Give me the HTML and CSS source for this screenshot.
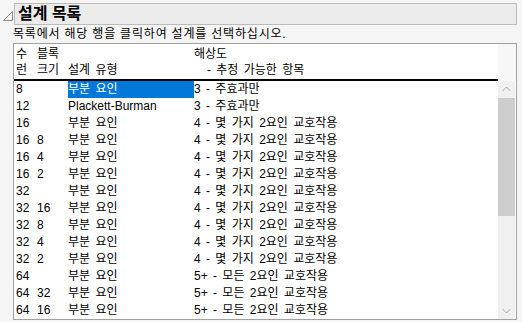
FILE: index.html
```html
<!DOCTYPE html>
<html lang="ko">
<head>
  <meta charset="UTF-8">
  <title>설계 목록</title>
  <link rel="stylesheet" href="styles.css">
</head>
<body>
  <div class="panel">
    <div class="panel-title">
      <span class="toggle">
        <svg width="10" height="10" viewBox="0 0 10 10"><path d="M9.5 0.5 L9.5 9.5 L0.5 9.5 Z" fill="none" stroke="#8a8a8a" stroke-width="1"/></svg>
      </span>
      <h1>설계 목록</h1>
    </div>
    <div class="panel-body">
      <p class="hint">목록에서 해당 행을 클릭하여 설계를 선택하십시오.</p>
      <div class="listbox">
        <div class="list-head">
          <div class="row head">
            <span>수</span><span>블록</span><span></span><span>해상도</span>
          </div>
          <div class="row head">
            <span>런</span><span>크기</span><span>설계 유형</span><span class="indent">- 추정 가능한 항목</span>
          </div>
        </div>
        <div class="corner"></div>
        <div class="list-rows" id="rows"></div>
        <div class="scrollbar">
          <div class="arrow">
            <svg width="9" height="6" viewBox="0 0 9 6"><path d="M0.5 5 L4.5 1 L8.5 5" fill="none" stroke="#a8a8a8" stroke-width="1"/></svg>
          </div>
          <div class="thumb"></div>
          <div class="track"></div>
          <div class="arrow">
            <svg width="9" height="6" viewBox="0 0 9 6"><path d="M0.5 1 L4.5 5 L8.5 1" fill="none" stroke="#a8a8a8" stroke-width="1"/></svg>
          </div>
        </div>
      </div>
    </div>
  </div>

  <script>
    const designs = [
      ["8", "", "부분 요인", "3 - 주효과만"],
      ["12", "", "Plackett-Burman", "3 - 주효과만"],
      ["16", "", "부분 요인", "4 - 몇 가지 2요인 교호작용"],
      ["16", "8", "부분 요인", "4 - 몇 가지 2요인 교호작용"],
      ["16", "4", "부분 요인", "4 - 몇 가지 2요인 교호작용"],
      ["16", "2", "부분 요인", "4 - 몇 가지 2요인 교호작용"],
      ["32", "", "부분 요인", "4 - 몇 가지 2요인 교호작용"],
      ["32", "16", "부분 요인", "4 - 몇 가지 2요인 교호작용"],
      ["32", "8", "부분 요인", "4 - 몇 가지 2요인 교호작용"],
      ["32", "4", "부분 요인", "4 - 몇 가지 2요인 교호작용"],
      ["32", "2", "부분 요인", "4 - 몇 가지 2요인 교호작용"],
      ["64", "", "부분 요인", "5+ - 모든 2요인 교호작용"],
      ["64", "32", "부분 요인", "5+ - 모든 2요인 교호작용"],
      ["64", "16", "부분 요인", "5+ - 모든 2요인 교호작용"]
    ];

    const list = document.getElementById("rows");
    designs.forEach((d, i) => {
      const row = document.createElement("div");
      row.className = "row";
      d.forEach((text, col) => {
        const cell = document.createElement("span");
        cell.textContent = text;
        if (i === 0 && col === 2) cell.classList.add("selected");
        row.appendChild(cell);
      });
      list.appendChild(row);
    });
  </script>
</body>
</html>
```

FILE: styles.css
```css
body {
  margin: 0;
  padding: 3px 5px 0 3px;
  background-color: #f5f5f5;
  font-family: "Liberation Sans", "Noto Sans CJK KR", sans-serif;
  font-size: 12px;
  color: #000;
}
.panel-title {
  display: flex;
  align-items: flex-start;
}
.toggle {
  width: 11px;
  padding-top: 8px;
  line-height: 0;
}
.panel-title h1 {
  flex: 1;
  margin: 0;
  height: 20px;
  padding-left: 3px;
  background-color: #ebebeb;
  border: 1px solid #bcbcbc;
  font-size: 16px;
  font-weight: bold;
  line-height: 20px;
}
.panel-body {
  padding-left: 10px;
}
.hint {
  margin: 0;
  height: 18px;
  line-height: 18px;
  letter-spacing: 0.8px;
}
.listbox {
  display: grid;
  grid-template-columns: 1fr 18px;
  height: 275px;
  background-color: #fff;
  border: 1px solid #a0a0a0;
}
.list-head {
  border-bottom: 2px solid #000;
  padding-top: 2px;
}
.corner {
  background-color: #f7f7f7;
}
.row {
  display: grid;
  grid-template-columns: 21px 31px 126px 1fr;
  height: 17px;
  line-height: 17px;
  padding-left: 2px;
  white-space: nowrap;
  word-spacing: 2px;
}
.row.head {
  height: 16px;
  line-height: 16px;
}
.indent {
  padding-left: 13px;
}
.list-rows {
  overflow: hidden;
}
.selected {
  background-color: #0078d7;
  color: #fff;
}
.scrollbar {
  display: flex;
  flex-direction: column;
  background-color: #f0f0f0;
  margin-right: 1px;
}
.arrow {
  height: 17px;
  display: flex;
  align-items: center;
  justify-content: center;
}
.thumb {
  height: 118px;
  background-color: #cdcdcd;
}
.track {
  flex: 1;
}
```
